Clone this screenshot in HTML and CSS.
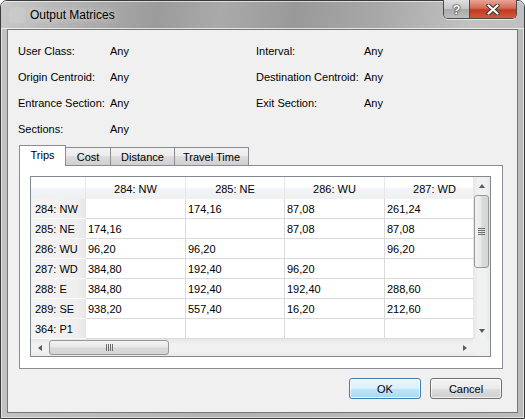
FILE: index.html
```html
<!DOCTYPE html>
<html lang="en">
<head>
    <meta charset="UTF-8">
    <title>Output Matrices</title>
    <link rel="stylesheet" href="styles.css">
</head>
<body>

<div class="window">
    <div class="titlebar">
        <span class="app-icon"></span>
        <span class="title">Output Matrices</span>
        <div class="caption">
            <span class="cap-btn help">?</span>
            <span class="cap-btn close">
                <svg width="14" height="11" viewBox="0 0 14 11">
                    <path d="M2.5 1.5 L11.5 9.5 M11.5 1.5 L2.5 9.5" stroke="#3a3a3a" stroke-width="4.2" stroke-linecap="round"/>
                    <path d="M2.5 1.5 L11.5 9.5 M11.5 1.5 L2.5 9.5" stroke="#fff" stroke-width="2.2" stroke-linecap="round"/>
                </svg>
            </span>
        </div>
    </div>

    <div class="client">
        <div class="filters">
            <span>User Class:</span><span>Any</span>
            <span>Interval:</span><span>Any</span>
            <span>Origin Centroid:</span><span>Any</span>
            <span>Destination Centroid:</span><span>Any</span>
            <span>Entrance Section:</span><span>Any</span>
            <span>Exit Section:</span><span>Any</span>
            <span>Sections:</span><span>Any</span>
        </div>

        <div class="tabs">
            <span class="tab active trips">Trips</span>
            <span class="tab cost">Cost</span>
            <span class="tab distance">Distance</span>
            <span class="tab travel">Travel Time</span>
        </div>

        <div class="panel">
            <div class="grid-box">
                <div class="cells">
                    <div class="row head">
                        <span class="hcell"></span>
                        <span class="hcell">284: NW</span>
                        <span class="hcell">285: NE</span>
                        <span class="hcell">286: WU</span>
                        <span class="hcell">287: WD</span>
                    </div>
                    <div class="row">
                        <span class="rh">284: NW</span><span class="c"></span><span class="c">174,16</span><span class="c">87,08</span><span class="c">261,24</span>
                    </div>
                    <div class="row">
                        <span class="rh">285: NE</span><span class="c">174,16</span><span class="c"></span><span class="c">87,08</span><span class="c">87,08</span>
                    </div>
                    <div class="row">
                        <span class="rh">286: WU</span><span class="c">96,20</span><span class="c">96,20</span><span class="c"></span><span class="c">96,20</span>
                    </div>
                    <div class="row">
                        <span class="rh">287: WD</span><span class="c">384,80</span><span class="c">192,40</span><span class="c">96,20</span><span class="c"></span>
                    </div>
                    <div class="row">
                        <span class="rh">288: E</span><span class="c">384,80</span><span class="c">192,40</span><span class="c">192,40</span><span class="c">288,60</span>
                    </div>
                    <div class="row">
                        <span class="rh">289: SE</span><span class="c">938,20</span><span class="c">557,40</span><span class="c">16,20</span><span class="c">212,60</span>
                    </div>
                    <div class="row">
                        <span class="rh">364: P1</span><span class="c"></span><span class="c"></span><span class="c"></span><span class="c"></span>
                    </div>
                </div>

                <div class="vscroll">
                    <span class="arrow"><i class="tri up"></i></span>
                    <div class="track">
                        <span class="thumb v"><i class="grip"></i></span>
                    </div>
                    <span class="arrow"><i class="tri down"></i></span>
                </div>

                <div class="hscroll">
                    <span class="arrow"><i class="tri left"></i></span>
                    <div class="track">
                        <span class="thumb h"><i class="grip"></i></span>
                    </div>
                    <span class="arrow"><i class="tri right"></i></span>
                </div>

                <div class="corner"></div>
            </div>
        </div>

        <div class="actions">
            <button class="default">OK</button>
            <button>Cancel</button>
        </div>
    </div>
</div>

</body>
</html>
```

FILE: styles.css
```css
* {
    box-sizing: border-box;
}
body {
    margin: 0;
    font-family: "Liberation Sans", Arial, sans-serif;
    font-size: 11px;
    color: #000;
    background: #fff;
}
.window {
    width: 525px;
    height: 419px;
    border: 1px solid #3b3b3b;
    border-radius: 7px 7px 0 0;
    background: linear-gradient(to right, #c2c2c2, #b3b3b3 40%, #bcbcbc);
    box-shadow: inset 0 0 0 1px rgba(255, 255, 255, 0.55);
    display: flex;
    flex-direction: column;
}

/* title bar */
.titlebar {
    height: 28px;
    display: flex;
    align-items: center;
    border-radius: 6px 6px 0 0;
    background: linear-gradient(100deg, #c8c8c8 0%, #acacac 18%, #9b9b9b 30%, #aaaaaa 42%, #999999 56%, #a8a8a8 72%, #c2c2c2 90%, #c0c0c0 100%);
    box-shadow: inset 0 1px 0 rgba(255, 255, 255, 0.6), inset 0 -1px 0 rgba(255, 255, 255, 0.7);
}
.app-icon {
    width: 15px;
    height: 15px;
    margin-left: 9px;
    border-radius: 3px;
    background: rgba(255, 255, 255, 0.12);
    box-shadow: 0 0 3px rgba(255, 255, 255, 0.2);
}
.title {
    margin-left: 5px;
    font-size: 12px;
    color: #000;
    text-shadow: 0 0 6px rgba(255, 255, 255, 0.9);
}
.caption {
    margin-left: auto;
    margin-right: 7px;
    align-self: flex-start;
    display: flex;
    height: 19px;
    margin-top: -1px;
    border: 1px solid #4b4b4b;
    border-top: none;
    border-radius: 0 0 5px 5px;
    overflow: hidden;
    box-shadow: 0 1px 0 rgba(255, 255, 255, 0.6);
}
.cap-btn {
    display: flex;
    align-items: center;
    justify-content: center;
}
.help {
    width: 26px;
    border-right: 1px solid #4b4b4b;
    background: linear-gradient(#e0e0e0, #c4c4c4 50%, #a9a9a9 50%, #bdbdbd);
    color: #fff;
    font-weight: bold;
    font-size: 13px;
    text-shadow: 0 0 1px #333, 0 0 1px #333, 0 0 2px #333;
}
.close {
    width: 46px;
    background: linear-gradient(#e8a595, #d26a55 45%, #c0381f 55%, #d45a3d);
}

/* client area */
.client {
    flex: 1;
    margin: 0 6px 5px;
    background: #f0f0f0;
    border: 1px solid #767676;
    display: flex;
    flex-direction: column;
}
.filters {
    display: grid;
    grid-template-columns: 92px 146px 108px 1fr;
    grid-auto-rows: 26px;
    align-items: center;
    padding: 8px 0 0 10px;
}

/* tabs */
.tabs {
    display: flex;
    align-items: flex-end;
    height: 20px;
    margin: 3px 0 0 11px;
    position: relative;
    z-index: 1;
}
.tab {
    height: 18px;
    border: 1px solid #898c95;
    border-bottom: none;
    margin-left: -1px;
    background: linear-gradient(#f2f2f2, #ebebeb 50%, #dddddd 50%, #cfcfcf);
    display: flex;
    align-items: center;
    justify-content: center;
    padding-top: 1px;
}
.tab.active {
    height: 21px;
    margin-left: 0;
    margin-bottom: -1px;
    background: #fff;
    padding-top: 0;
    padding-bottom: 2px;
}
.trips { width: 47px; }
.cost { width: 46px; }
.distance { width: 65px; }
.travel { width: 75px; }

.panel {
    margin: 0 14px 0 11px;
    background: #fff;
    border: 1px solid #898c95;
    padding: 10px 11px 11px 10px;
}

/* matrix grid */
.grid-box {
    border: 1px solid #828790;
    display: grid;
    grid-template-columns: 442px 17px;
    grid-template-rows: 162px 17px;
}
.cells {
    overflow: hidden;
    background: #fff;
}
.row {
    display: grid;
    grid-template-columns: 55px 100px 99px 100px 100px;
    height: 20px;
}
.row.head {
    height: 22px;
}
.hcell {
    display: flex;
    align-items: center;
    justify-content: center;
    border-right: 1px solid #e4e6ea;
    background: linear-gradient(#ffffff, #ffffff 45%, #f2f3f5 55%, #eef0f2);
    padding-top: 1px;
}
.rh {
    display: flex;
    align-items: center;
    padding-left: 4px;
    background: linear-gradient(to right, #f4f4f4, #eeeeee 85%, #e6e6e6);
    border-bottom: 1px solid #fbfbfb;
}
.c {
    display: flex;
    align-items: center;
    padding-left: 2px;
    border-right: 1px solid #dadada;
    border-bottom: 1px solid #dadada;
}
.row .c:first-of-type {
    border-left: 1px solid #dadada;
}

/* scrollbars */
.vscroll, .hscroll {
    display: flex;
    background: linear-gradient(to right, #e6e6e6, #f1f1f1 30%, #f1f1f1 70%, #e9e9e9);
}
.vscroll {
    flex-direction: column;
}
.hscroll {
    background: linear-gradient(#e6e6e6, #f1f1f1 30%, #f1f1f1 70%, #e9e9e9);
}
.arrow {
    width: 17px;
    height: 17px;
    flex: none;
    display: flex;
    align-items: center;
    justify-content: center;
}
.track {
    flex: 1;
    display: flex;
}
.vscroll .track {
    flex-direction: column;
    padding-top: 1px;
}
.hscroll .track {
    padding-left: 1px;
}
.tri {
    width: 0;
    height: 0;
    border: 3px solid transparent;
}
.tri.up { border-bottom: 4px solid #5c5c5c; border-top: none; }
.tri.down { border-top: 4px solid #5c5c5c; border-bottom: none; }
.tri.left { border-right: 4px solid #5c5c5c; border-left: none; }
.tri.right { border-left: 4px solid #5c5c5c; border-right: none; }
.thumb {
    border: 1px solid #979797;
    border-radius: 3px;
    display: flex;
    align-items: center;
    justify-content: center;
}
.thumb.v {
    width: 15px;
    height: 73px;
    margin-left: 1px;
    background: linear-gradient(to right, #f3f3f3, #e9e9e9 45%, #d9d9d9 55%, #d5d5d5);
}
.thumb.h {
    width: 120px;
    height: 15px;
    margin-top: 1px;
    background: linear-gradient(#f3f3f3, #e9e9e9 45%, #d9d9d9 55%, #d5d5d5);
}
.grip {
    display: block;
}
.thumb.v .grip {
    width: 7px;
    height: 7px;
    background: repeating-linear-gradient(#6d6d6d 0 1px, transparent 1px 2px);
}
.thumb.h .grip {
    width: 7px;
    height: 7px;
    background: repeating-linear-gradient(to right, #6d6d6d 0 1px, transparent 1px 2px);
}
.corner {
    background: #f0f0f0;
}

/* buttons */
.actions {
    display: flex;
    justify-content: flex-end;
    gap: 9px;
    margin: 9px 15px 0 0;
}
button {
    width: 72px;
    height: 21px;
    font-family: inherit;
    font-size: 11px;
    color: #000;
    border: 1px solid #707070;
    border-radius: 3px;
    background: linear-gradient(#f2f2f2, #ebebeb 50%, #dddddd 50%, #cfcfcf);
    box-shadow: inset 0 0 0 1px rgba(255, 255, 255, 0.7);
    padding: 0;
}
button.default {
    border-color: #3c7fb1;
    background: linear-gradient(#eaf6fd, #d9f0fc 50%, #bee6fd 50%, #a7d9f5);
    box-shadow: inset 0 0 0 1px rgba(255, 255, 255, 0.8);
}
```
